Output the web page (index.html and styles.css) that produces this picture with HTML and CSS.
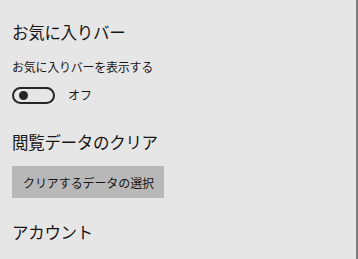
FILE: index.html
```html
<!DOCTYPE html>
<html lang="ja">
<head>
<meta charset="utf-8">
<link rel="stylesheet" href="styles.css">
</head>
<body>
<div class="pane">
  <div class="content">
    <h2 class="heading first">お気に入りバー</h2>
    <div class="label">お気に入りバーを表示する</div>
    <div class="toggle-row">
      <span class="toggle"><span class="knob"></span></span>
      <span class="state">オフ</span>
    </div>
    <h2 class="heading clear">閲覧データのクリア</h2>
    <button class="btn">クリアするデータの選択</button>
    <h2 class="heading account">アカウント</h2>
  </div>
</div>
</body>
</html>
```
FILE: styles.css
```css
html, body {
  margin: 0;
  padding: 0;
  width: 358px;
  height: 259px;
  overflow: hidden;
  background: #e6e6e6;
}
.pane {
  box-sizing: border-box;
  height: 259px;
  border-right: 2px solid #7c7c7c;
  font-family: "Noto Sans CJK JP", "Noto Sans", sans-serif;
  color: #161616;
}
.content {
  display: flex;
  flex-direction: column;
  align-items: flex-start;
  padding: 20px 0 0 12px;
}
.heading {
  margin: 0;
  font-size: 16.5px;
  font-weight: 400;
  line-height: 24px;
  letter-spacing: -0.3px;
}
.label {
  margin-top: 15px;
  font-size: 12px;
  line-height: 16px;
  letter-spacing: -0.25px;
}
.toggle-row {
  margin-top: 11px;
  display: flex;
  align-items: center;
  gap: 13px;
  height: 18px;
}
.toggle {
  box-sizing: border-box;
  width: 43px;
  height: 17px;
  border: 2px solid #262626;
  border-radius: 9px;
  display: flex;
  align-items: center;
  padding-left: 5px;
}
.knob {
  width: 9px;
  height: 9px;
  border-radius: 50%;
  background: #262626;
}
.state {
  font-size: 12px;
  line-height: 16px;
}
.heading.clear {
  margin-top: 26px;
}
.btn {
  margin-top: 12px;
  width: 152px;
  height: 32px;
  border: none;
  background: #b8b8b8;
  font-family: inherit;
  color: #161616;
  font-size: 12px;
  letter-spacing: -0.1px;
  padding: 0 0 0 1px;
  text-align: center;
}
.heading.account {
  margin-top: 22px;
}
```
